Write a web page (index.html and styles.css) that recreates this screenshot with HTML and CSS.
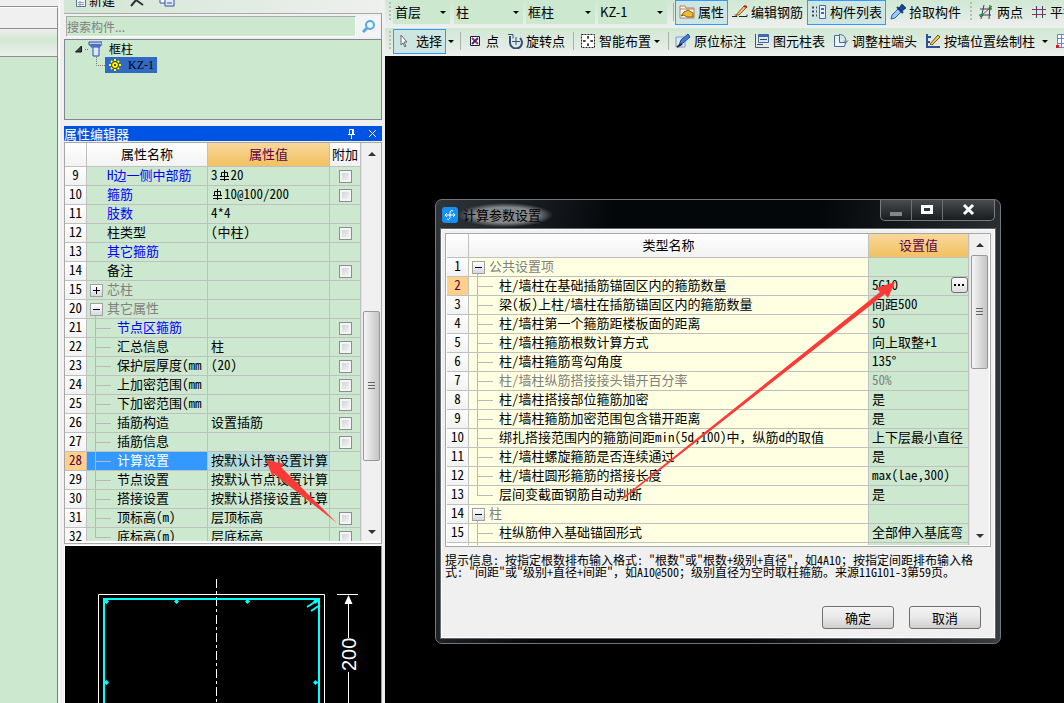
FILE: index.html
```html
<!DOCTYPE html>
<html lang="zh-CN">
<head>
<meta charset="utf-8">
<title>计算参数设置</title>
<link rel="stylesheet" href="styles.css">
</head>
<body>
<div class="app">
  <aside class="strip">
    <div class="strip-row first"></div>
    <div class="strip-row second"></div>
    <div class="strip-row bar"></div>
    <div class="strip-body"></div>
  </aside>

  <aside class="panel">
    <div class="mini-bar">
      <button class="mini"><svg width="10" height="14" viewBox="0 0 10 14"><path d="M.5 .5h9v13h-9z" fill="#f4f8ff" stroke="#5a7396"/><path d="M2 9.500h6M2 11.500h6M4 8v5" stroke="#8aa0c0"/></svg>新建</button>
      <button class="mini" aria-label="删除"><svg width="14" height="14" viewBox="0 0 14 14"><path d="M1 13 6 7 13 12M6 7 11 1" fill="none" stroke="#333" stroke-width="2"/></svg></button>
      <button class="mini" aria-label="复制"><svg width="16" height="14" viewBox="0 0 16 14"><path d="M1 2h8v8H1z" fill="#fff" stroke="#3050a0"/><path d="M6 5h9v8H6z" fill="#dfe9ff" stroke="#3050a0"/><path d="M8 10h5" stroke="#3050a0"/></svg></button>
    </div>
    <div class="search">
      <input type="text" placeholder="搜索构件..." aria-label="搜索构件">
      <button aria-label="搜索"><svg width="15" height="15" viewBox="0 0 15 15"><circle cx="9" cy="6" r="4" fill="#e8f6ff" stroke="#58a8e4" stroke-width="2"/><path d="M6 9 2 13" stroke="#58a8e4" stroke-width="3"/></svg></button>
    </div>
    <div class="tree">
      <div class="node">
        <svg width="28" height="16" viewBox="0 0 28 16"><path d="M7.500 5v6h-6z" fill="#444" stroke="#111"/><path d="M11 8.500h3" stroke="#777" stroke-dasharray="1 1"/><path d="M15 1h13v3H15zM17 4h9v2h-9z" fill="#bcd0ff" stroke="#2c4cae"/><path d="M19 6h6v9h-6z" fill="#dce8ff" stroke="#2c4cae"/></svg>
        <span>框柱</span>
      </div>
      <div class="node child">
        <svg width="9" height="16" viewBox="0 0 9 16"><path d="M.5 0v8.500H9" fill="none" stroke="#777" stroke-dasharray="1 1"/></svg>
        <span class="selected"><svg width="12" height="12" viewBox="0 0 12 12"><path d="M6 0v12M0 6h12M2 2l8 8M10 2l-8 8" stroke="#ff0" stroke-width="2"/><circle cx="6" cy="6" r="3.500" fill="#ff0" stroke="#332e00"/><circle cx="6" cy="6" r="1" fill="#222"/></svg>KZ-1</span>
      </div>
    </div>
    <div class="panel-title">
      <span>属性编辑器</span>
      <button aria-label="固定"><svg width="9" height="11" viewBox="0 0 9 11"><path d="M2.500 6V1.500h4V6M5.500 1v5M1 6.500h7M4.500 7v4" fill="none" stroke="#fff"/></svg></button>
      <button aria-label="关闭"><svg width="9" height="9" viewBox="0 0 9 9"><path d="M1 1l7 7M8 1 1 8" stroke="#fff"/></svg></button>
    </div>
    <div class="grid-box props">
      <div class="grid-view">
        <table class="grid">
          <colgroup><col class="c-num"><col class="c-name"><col><col class="c-add"></colgroup>
          <thead><tr><th></th><th>属性名称</th><th class="hot">属性值</th><th>附加</th></tr></thead>
          <tbody>
            <tr><th>9</th><td class="top blue">H边一侧中部筋</td><td>3<svg class="bar-mark" viewBox="0 0 13 13"><use href="#rebar"/></svg>20</td><td><input type="checkbox" aria-label="附加 9"></td></tr>
            <tr><th>10</th><td class="top blue">箍筋</td><td><svg class="bar-mark" viewBox="0 0 13 13"><use href="#rebar"/></svg>10@100/200</td><td><input type="checkbox" aria-label="附加 10"></td></tr>
            <tr><th>11</th><td class="top blue">肢数</td><td>4*4</td><td></td></tr>
            <tr><th>12</th><td class="top">柱类型</td><td>(中柱)</td><td><input type="checkbox" aria-label="附加 12"></td></tr>
            <tr><th>13</th><td class="top blue">其它箍筋</td><td></td><td></td></tr>
            <tr><th>14</th><td class="top">备注</td><td></td><td><input type="checkbox" aria-label="附加 14"></td></tr>
            <tr><th>15</th><td class="group closed"><button class="toggle plus" aria-label="展开"></button>芯柱</td><td></td><td></td></tr>
            <tr><th>20</th><td class="group"><button class="toggle" aria-label="折叠"></button>其它属性</td><td></td><td></td></tr>
            <tr><th>21</th><td class="leaf blue">节点区箍筋</td><td></td><td><input type="checkbox" aria-label="附加 21"></td></tr>
            <tr><th>22</th><td class="leaf">汇总信息</td><td>柱</td><td><input type="checkbox" aria-label="附加 22"></td></tr>
            <tr><th>23</th><td class="leaf">保护层厚度(mm</td><td>(20)</td><td><input type="checkbox" aria-label="附加 23"></td></tr>
            <tr><th>24</th><td class="leaf">上加密范围(mm</td><td></td><td><input type="checkbox" aria-label="附加 24"></td></tr>
            <tr><th>25</th><td class="leaf">下加密范围(mm</td><td></td><td><input type="checkbox" aria-label="附加 25"></td></tr>
            <tr><th>26</th><td class="leaf">插筋构造</td><td>设置插筋</td><td><input type="checkbox" aria-label="附加 26"></td></tr>
            <tr><th>27</th><td class="leaf">插筋信息</td><td></td><td><input type="checkbox" aria-label="附加 27"></td></tr>
            <tr class="current"><th>28</th><td class="leaf">计算设置</td><td>按默认计算设置计算</td><td></td></tr>
            <tr><th>29</th><td class="leaf">节点设置</td><td>按默认节点设置计算</td><td></td></tr>
            <tr><th>30</th><td class="leaf">搭接设置</td><td>按默认搭接设置计算</td><td></td></tr>
            <tr><th>31</th><td class="leaf">顶标高(m)</td><td>层顶标高</td><td><input type="checkbox" aria-label="附加 31"></td></tr>
            <tr><th>32</th><td class="leaf last">底标高(m)</td><td>层底标高</td><td><input type="checkbox" aria-label="附加 32"></td></tr>
          </tbody>
        </table>
      </div>
      <div class="scroll"><i class="up"></i><div class="track"><b class="thumb"></b></div><i class="down"></i></div>
    </div>
    <div class="section-view">
      <svg width="316" height="158" viewBox="0 0 316 158">
        <g fill="none" stroke="#fff">
          <path d="M33.500 158V48.500h226V158"/>
          <path d="M151.500 33v125" stroke-dasharray="9 3 3 3"/>
          <path d="M272 48.500h21M283.500 50v42M283.500 126v32"/>
        </g>
        <path d="M39 158V53h215v105" fill="none" stroke="#0ff" stroke-width="2"/>
        <path d="M242 61l11-7M246 65l9-6" stroke="#0ff" stroke-width="2"/>
        <path d="M283.500 49l4 9h-8z" fill="#fff"/>
        <path d="M41.500 53l2.500 2.500-2.500 2.500-2.500-2.500zM111.500 53l2.500 2.500-2.500 2.500-2.500-2.500zM182.500 53l2.500 2.500-2.500 2.500-2.500-2.500zM250.500 53l2.500 2.500-2.500 2.500-2.500-2.500zM41.500 134l2.500 2.500-2.500 2.500-2.500-2.500zM250.500 134l2.500 2.500-2.500 2.500-2.500-2.500z" fill="#0ff"/>
        <text class="dim" transform="translate(291 125) rotate(-90)">200</text>
      </svg>
    </div>
  </aside>

  <main class="work">
    <div class="toolbar">
      <i class="grip"></i>
      <label class="combo short"><select aria-label="楼层"><option>首层</option></select><i class="caret"></i></label>
      <label class="combo"><select aria-label="构件类别"><option>柱</option></select><i class="caret"></i></label>
      <label class="combo"><select aria-label="构件类型"><option>框柱</option></select><i class="caret"></i></label>
      <label class="combo"><select aria-label="构件"><option>KZ-1</option></select><i class="caret"></i></label>
      <i class="sep"></i>
      <button class="tool on"><svg viewBox="0 0 16 16"><path d="M1 5V2h5l1 2h8v10H1z" fill="#fff" stroke="#b87a58"/><path d="M1 5h14" stroke="#b87a58"/><path d="M5 8l4-2 5 3v4H8l-3-2-3 1z" fill="#f0bc38" stroke="#80601c"/></svg>属性</button>
      <button class="tool"><svg viewBox="0 0 16 16"><path d="M0 12.500h5l-2-2M7 12.500h8l0-2" fill="none" stroke="#222"/><path d="M4 11l8-9 3 1-8 8z" fill="#ecc06c" stroke="#8c5c30"/><path d="M12 2l3 1" stroke="#c02020" stroke-width="2"/></svg>编辑钢筋</button>
      <button class="tool on"><svg viewBox="0 0 16 16"><path d="M1 3.500h2M1 7.500h2M1 11.500h2M5 3.500h1M5 7.500h1M5 11.500h1" stroke="#446" stroke-width="2"/><path d="M8.500 1.500h6v13h-6z" fill="#e8f0ff" stroke="#4668a8"/><path d="M10 4h3v2h-3zM10 8h3v2h-3z" fill="#4668a8"/></svg>构件列表</button>
      <button class="tool"><svg viewBox="0 0 16 16"><path d="M1 15l1-4 6-6 3 3-6 6z" fill="#9cc8ff" stroke="#2c5fae"/><path d="M7 3l6 6" stroke="#183c80" stroke-width="2"/><path d="M9 5l3-4 3 3-4 3z" fill="#2458a4" stroke="#183c80" stroke-width="2"/></svg>拾取构件</button>
      <i class="grip apart"></i>
      <button class="tool"><svg viewBox="0 0 16 16"><path d="M2 5h12M1 11h12M6 1 3 15M12 1 11 15" stroke="#3c3c70"/><path d="M2 13 14 2" stroke="#c02828"/><circle cx="4" cy="11" r="1.500" fill="#159030"/><circle cx="12" cy="4" r="1.500" fill="#159030"/></svg>两点</button>
      <button class="tool"><svg viewBox="0 0 16 16"><path d="M5.500 2v12M11.500 2v12" stroke="#404078"/><path d="M1 5.500h14M1 10.500h14" stroke="#903050"/></svg>平行</button>
    </div>
    <div class="toolbar lower">
      <i class="grip"></i>
      <button class="tool on"><svg viewBox="0 0 16 16"><path d="M4 2v10l2-2 2 4 1-1-2-4h3z" fill="#fff" stroke="#667"/></svg>选择</button>
      <i class="caret"></i>
      <i class="sep"></i>
      <button class="tool"><svg viewBox="0 0 16 16"><path d="M3.500 3.500h9v9h-9z" fill="#fff" stroke="#223"/><path d="M5 5l6 6" stroke="#d02030" stroke-width="2"/><path d="M11 5l-6 6" stroke="#2030a0" stroke-width="2"/></svg>点</button>
      <button class="tool"><svg viewBox="0 0 16 16"><path d="M3 3v6a6 6 0 1 0 10-4" fill="none" stroke="#36507a" stroke-width="2"/><path d="M1 1.500h5v4M9 4v8M5 8.500h8" fill="none" stroke="#36507a"/></svg>旋转点</button>
      <i class="sep"></i>
      <button class="tool"><svg viewBox="0 0 16 16"><path d="M1.500 1.500h13v13h-13z" fill="#fff" stroke="#222" stroke-dasharray="2 1"/><path d="M8 3v3M8 10v3M3 8h3M10 8h3M7 4h2M7 12h2M4 7v2M12 7v2" stroke="#111"/></svg>智能布置<i class="caret"></i></button>
      <i class="sep"></i>
      <button class="tool"><svg viewBox="0 0 16 16"><path d="M1 4h9v10H1z" fill="#dce8ff" stroke="#8298c0"/><path d="M4 12l2-5 7-6 2 3-7 6z" fill="#4380d4" stroke="#174a96"/><path d="M2 14l5-3" stroke="#222" stroke-width="2"/></svg>原位标注</button>
      <button class="tool"><svg viewBox="0 0 16 16"><path d="M1.500 1v13.500H15" fill="none" stroke="#556"/><path d="M4.500 1.500h10v8h-10z" fill="#d8e6ff" stroke="#4668a8"/><path d="M5 3h9" stroke="#4668a8" stroke-width="2"/><path d="M6 6.500h7M3 11.500h6" stroke="#446"/></svg>图元柱表</button>
      <button class="tool"><svg viewBox="0 0 16 16"><path d="M1.500 2.500h5v7h6l-1 4h-10z" fill="#eef4ff" stroke="#4468a0"/><path d="M6 1.500c5 0 7 3 7 8M11 7.500l2 2 2-2" fill="none" stroke="#4468a0"/></svg>调整柱端头</button>
      <button class="tool"><svg viewBox="0 0 16 16"><path d="M2 1v13h13M2 4h4M2 9h3" fill="none" stroke="#314f92" stroke-width="2"/><path d="M5 11l8-9 2 2-8 8z" fill="#efc960" stroke="#705020"/></svg>按墙位置绘制柱<i class="caret wide"></i></button>
      <button class="tool" aria-label="柱位"><svg viewBox="0 0 16 16"><path d="M1.500 1.500h13v13h-13zM5.500 1v14M10.500 1v14M1 5.500h14M1 10.500h14" fill="#fff" stroke="#6688c0"/><path d="M9 4h3v3H9zM0 12h3v3H0zM9 12h3v3H9z" fill="#e01818"/></svg></button>
    </div>
    <div class="canvas"></div>
  </main>
</div>

<section class="dialog" role="dialog" aria-label="计算参数设置">
  <header>
    <svg width="16" height="16" viewBox="0 0 16 16"><rect width="16" height="16" rx="3" fill="#1690f4"/><path d="M11 4a2 2 0 0 0-3 1v6a2 2 0 0 1-3 1M3 8h10M5 6 3 8l2 2M11 6l2 2-2 2" fill="none" stroke="#fff"/></svg>
    <h1>计算参数设置</h1>
    <div class="win">
      <button aria-label="最小化"><svg width="14" height="14" viewBox="0 0 14 14"><path d="M1 9h12v4H1z" fill="#858585"/></svg></button>
      <button aria-label="最大化"><svg width="14" height="14" viewBox="0 0 14 14"><path d="M2.500 3.500h9v6h-9z" fill="none" stroke="#fff" stroke-width="3"/></svg></button>
      <button class="close" aria-label="关闭"><svg width="14" height="14" viewBox="0 0 14 14"><path d="M2 2l9 9M11 2l-9 9" stroke="#fff" stroke-width="3"/></svg></button>
    </div>
  </header>
  <div class="client">
    <div class="grid-box calc">
      <div class="grid-view">
        <table class="grid">
          <colgroup><col class="c-num"><col><col class="c-val"></colgroup>
          <thead><tr><th></th><th>类型名称</th><th class="hot">设置值</th></tr></thead>
          <tbody>
            <tr><th>1</th><td class="group"><button class="toggle" aria-label="折叠"></button>公共设置项</td><td></td></tr>
            <tr class="mark"><th>2</th><td class="leaf">柱/墙柱在基础插筋锚固区内的箍筋数量</td><td><div class="edit">5G10<button class="more" aria-label="更多"><svg width="11" height="2" viewBox="0 0 11 2"><path d="M0 0h2v2H0zM4 0h2v2H4zM8 0h2v2H8z"/></svg></button></div></td></tr>
            <tr><th>3</th><td class="leaf">梁(板)上柱/墙柱在插筋锚固区内的箍筋数量</td><td>间距500</td></tr>
            <tr><th>4</th><td class="leaf">柱/墙柱第一个箍筋距楼板面的距离</td><td>50</td></tr>
            <tr><th>5</th><td class="leaf">柱/墙柱箍筋根数计算方式</td><td>向上取整+1</td></tr>
            <tr><th>6</th><td class="leaf">柱/墙柱箍筋弯勾角度</td><td>135°</td></tr>
            <tr class="off"><th>7</th><td class="leaf">柱/墙柱纵筋搭接接头错开百分率</td><td>50%</td></tr>
            <tr><th>8</th><td class="leaf">柱/墙柱搭接部位箍筋加密</td><td>是</td></tr>
            <tr><th>9</th><td class="leaf">柱/墙柱箍筋加密范围包含错开距离</td><td>是</td></tr>
            <tr><th>10</th><td class="leaf">绑扎搭接范围内的箍筋间距min(5d,100)<span class="full">中，纵</span>筋d的取值</td><td>上下层最小直径</td></tr>
            <tr><th>11</th><td class="leaf">柱/墙柱螺旋箍筋是否连续通过</td><td>是</td></tr>
            <tr><th>12</th><td class="leaf">柱/墙柱圆形箍筋的搭接长度</td><td>max(lae,300)</td></tr>
            <tr><th>13</th><td class="leaf last">层间变截面钢筋自动判断</td><td>是</td></tr>
            <tr><th>14</th><td class="group"><button class="toggle" aria-label="折叠"></button>柱</td><td></td></tr>
            <tr><th>15</th><td class="leaf">柱纵筋伸入基础锚固形式</td><td>全部伸入基底弯</td></tr>
            <tr><th></th><td class="leaf"></td><td></td></tr>
          </tbody>
        </table>
      </div>
      <div class="scroll"><i class="up"></i><div class="track"><b class="thumb"></b></div><i class="down"></i></div>
    </div>
    <p class="hint">提示信息: 按指定根数排布输入格式: "根数"或"根数+级别+直径"<span class="full">，如</span>4A10；按指定间距排布输入格式: "间距"或"级别+直径+间距"<span class="full">，如</span>A10@500；级别直径为空时取柱箍筋。来源11G101-3第59页。</p>
    <footer><button>确定</button><button>取消</button></footer>
  </div>
</section>

<svg class="arrows" width="1064" height="703" viewBox="0 0 1064 703">
  <path d="M266 460l18 4-3 3 56 56-63-49-1 4zM895 282l-7 16-3-4L622 500l-1-1 259-207-4-4z" fill="#fb3a38"/>
</svg>

<svg class="defs" width="0" height="0"><symbol id="rebar" viewBox="0 0 13 13"><path d="M6.500 1v11M3.500 3.500h6v4h-6zM2 7.500h9M2 10.500h9" fill="none" stroke="#000"/></symbol></svg>
</body>
</html>
```

FILE: styles.css
```css
* { box-sizing: border-box; }

body {
  margin: 0;
  height: 100vh;
  overflow: hidden;
  background: #000;
  color: #000;
  font: 13px/18px "Noto Sans CJK SC", sans-serif;
}

button, input, select { font: inherit; color: inherit; }
button { padding: 0; border: 0; background: none; }
svg { display: block; flex: none; }

.app { display: flex; height: 100%; background: #f0f0f0; }

/* left strip */
.strip { width: 60px; display: flex; flex-direction: column; border-right: 1px solid #fff; }
.strip-row { border-bottom: 1px solid #909090; margin-right: 1px; }
.first { height: 7px; }
.second { height: 22px; border-top: 1px solid #fff; border-right: 1px solid #909090; }
.bar { height: 28px; border-right: 1px solid #909090; background: linear-gradient(#eee, #d2e8d4 40%, #ecefec); }
.strip-body { flex: 1; margin-right: 1px; border-right: 1px solid #808080; background: #cce8cf; }

/* side panel */
.panel { width: 325px; padding: 0 3px 0 4px; display: flex; flex-direction: column; }
.mini-bar {
  height: 13px;
  padding-left: 12px;
  display: flex;
  align-items: flex-end;
  gap: 15px;
  overflow: hidden;
  background: linear-gradient(90deg, #d2e6d4, #eef0ee);
}
.mini { display: flex; align-items: center; gap: 3px; height: 26px; flex: none; }
.search { display: flex; height: 26px; padding: 2px 1px 2px 2px; border-top: 1px solid #aaa; border-right: 1px solid #999; }
.search input {
  flex: 1;
  min-width: 0;
  padding: 0;
  border: 1px solid #aaa;
  border-right-color: #fff;
  border-bottom-color: #fff;
  background: #cce8cf;
  font-size: 12px;
}
.search input::placeholder { color: #808080; }
.search button { width: 24px; display: grid; place-items: center; background: #f2f4f6; }
.tree { height: 81px; padding: 1px 9px; border: 1px solid #808890; background: #cce8cf; font-size: 12px; line-height: 16px; }
.node { display: flex; align-items: center; gap: 7px; }
.node.child { gap: 0; padding-left: 22px; }
.selected { display: flex; align-items: center; gap: 7px; padding: 0 3px 0 4px; background: #316ac5; font-family: "Liberation Serif", serif; }
.panel-title { display: flex; align-items: center; gap: 12px; height: 15px; margin-top: 6px; padding-right: 5px; background: #0054e3; color: #fff; line-height: 15px; }
.panel-title span { flex: 1; }

/* property grids */
.grid-box { display: flex; border: 1px solid #a8a8a8; background: #fff; }
.grid-view { flex: 1; min-width: 0; overflow: hidden; }
.props { height: 402px; margin-top: 1px; padding-bottom: 2px; }
.calc { height: 314px; padding: 0 1px 1px; }
.grid {
  width: 100%;
  table-layout: fixed;
  border-spacing: 0;
  line-height: 16px;
  font-feature-settings: "hwid";
}
.full { font-feature-settings: normal; }
.c-num { width: 22px; }
.c-name { width: 121px; }
.c-add { width: 31px; }
.c-val { width: 100px; }
.grid th, .grid td {
  height: 19px;
  padding: 0 0 2px;
  border-right: 1px solid #c0c0c0;
  border-bottom: 1px solid #c0c0c0;
  font-weight: 400;
  white-space: nowrap;
}
.grid th { background: linear-gradient(#fff, #f2f2f2); text-align: center; }
.grid thead th { height: 24px; }
.grid thead .hot { background: linear-gradient(#f8d79a, #f2c160); color: #60004c; }
.grid td { padding-left: 3px; background: #cce8cf; }
.grid td.top, .grid td.group { padding-left: 20px; }
.grid td.leaf { padding-left: 30px; }
.calc td:nth-child(2) { background-color: #ffffe1; }
.grid .blue { color: #00f; }
.grid .group, .off td { color: #808080; }
.grid td.leaf, .grid td.group {
  background-image: linear-gradient(#b8b8b8, #b8b8b8), linear-gradient(#b8b8b8, #b8b8b8);
  background-repeat: no-repeat;
  background-size: 1px 100%, 16px 1px;
  background-position: 8px 0, 8px 9px;
}
.grid td.leaf.last { background-size: 1px 10px, 16px 1px; }
.grid td.group { background-size: 1px 5px, 0 0; background-position: 8px 100%, 0 0; }
.grid td.closed { background-image: none; }
.grid .current th, .grid .mark th { background: #ffd08a; color: #60004c; }
.current td.leaf { background-color: #3399ff; color: #fff; }
.current td:nth-child(3) { background: #b5dcdb; }
.bar-mark { display: inline-block; width: 13px; height: 13px; vertical-align: -2px; }

.toggle {
  float: left;
  width: 13px;
  height: 13px;
  margin: 3px 0 0 -17px;
  border: 1px solid #a0a0a0;
  background:
    linear-gradient(#000, #000) center / 7px 1px no-repeat,
    linear-gradient(#fff, #d4dae2);
}
.toggle.plus {
  background:
    linear-gradient(#000, #000) center / 7px 1px no-repeat,
    linear-gradient(#000, #000) center / 1px 7px no-repeat,
    linear-gradient(#fff, #d4dae2);
}
.grid input {
  appearance: none;
  display: block;
  width: 13px;
  height: 13px;
  margin: 2px 0 0 6px;
  border: 1px solid #8c8f90;
  background: linear-gradient(135deg, #c8ccd2, #fafafa);
  box-shadow: inset 0 0 0 2px #f4f4f4;
}
.edit { display: flex; justify-content: space-between; align-items: center; height: 16px; }
.more {
  display: grid;
  place-items: center;
  width: 17px;
  height: 16px;
  border: 1px solid #707070;
  border-radius: 3px;
  background: linear-gradient(#fff, #ddd);
}

.scroll { width: 20px; display: flex; flex-direction: column; align-items: center; background: #f0f0f0; border-left: 1px solid #e2e2e2; }
.scroll .up, .scroll .down { border: 4px solid transparent; }
.scroll .up { border-top: 0; border-bottom: 4px solid #333; }
.scroll .down { margin: 7px 0; border-bottom: 0; border-top: 4px solid #333; }
.track { flex: 1; align-self: stretch; display: flex; flex-direction: column; }
.thumb {
  margin: 0 1px;
  border: 1px solid #989898;
  border-radius: 2px;
  background:
    repeating-linear-gradient(#666 0 1px, transparent 1px 3px) center / 7px 9px no-repeat,
    linear-gradient(90deg, #f6f6f6, #dcdcdc 50%, #c4c4c8);
}
.props .thumb { margin-top: 150px; height: 150px; }
.props .up { margin: 9px 0 5px; }
.calc .up { margin: 9px 0 8px; }
.calc .thumb { height: 114px; }

.section-view { flex: 1; margin-top: 1px; border-top: 1px solid #fff; border-left: 1px solid #fff; border-right: 1px solid #999; background: #000; overflow: hidden; }
.dim { font: 20px "Liberation Sans", sans-serif; fill: #fff; }

/* toolbars and canvas */
.work { flex: 1; min-width: 0; display: flex; flex-direction: column; }
.toolbar {
  display: flex;
  align-items: center;
  height: 28px;
  padding: 0 0 4px 4px;
  overflow: hidden;
  background: linear-gradient(#d0e8d3, #e0ece2 60%, #f0f0f0);
}
.toolbar.lower { padding-bottom: 2px; }
.canvas { flex: 1; background: #000; }
.grip { width: 2px; height: 20px; margin-right: 2px; flex: none; background: repeating-linear-gradient(#b4c0b6 0 2px, transparent 2px 4px); }
.grip.apart { margin-left: 5px; }
.combo { display: flex; align-items: center; flex: none; width: 69px; height: 24px; margin-right: 3px; padding-right: 2px; background: #cce8cf; }
.combo.short { width: 57px; margin-right: 4px; }
.combo select { appearance: none; flex: 1; min-width: 0; height: 22px; padding: 0 2px; border: 0; background: none; }
.caret { flex: none; border: 3px solid transparent; border-top-color: #000; border-bottom: 0; margin: 0 2px; }
.tool .caret { margin: 0; }
.tool .caret.wide { margin-left: 4px; }
.sep { width: 1px; height: 18px; margin: 0 2px 0 4px; flex: none; background: #a8b0a8; }
.combo + .sep { margin: 0 1px 0 3px; }
.tool { display: flex; align-items: center; gap: 3px; flex: none; height: 25px; padding: 0 3px; border: 1px solid transparent; white-space: nowrap; }
.tool svg { width: 16px; height: 16px; }
.tool.on { border-color: #3399ff; background: #cde6e2; }

/* floating dialog */
.dialog {
  position: absolute;
  left: 435px;
  top: 199px;
  width: 566px;
  padding: 0 5px 5px;
  border: 1px solid #70767a;
  border-radius: 7px;
  background: linear-gradient(100deg, #30363a, #04070a 28%, #04070a 60%, #3a3d40);
}
.dialog header { display: flex; align-items: center; height: 29px; padding-left: 1px; }
.dialog h1 {
  margin: 0;
  padding: 0 12px 0 5px;
  flex: none;
  font-size: 13px;
  font-weight: 400;
  line-height: 24px;
  background: radial-gradient(closest-side, #84888a 65%, transparent);
}
.win { display: flex; align-self: flex-start; margin-left: auto; border: 1px solid #777d80; border-top: 0; border-radius: 0 0 5px 5px; overflow: hidden; background: linear-gradient(#484c4f, #1a1c1e); }
.win button { width: 31px; height: 20px; display: grid; place-items: center; border-right: 1px solid #6c7072; }
.win .close { width: 51px; border: 0; }
.client { padding: 3px 3px 8px; border: 1px solid #fff; outline: 1px solid #60666a; background: #f0f0f0; }
.hint { margin: 7px 10px 0 0; font-size: 12px; line-height: 12px; font-feature-settings: "hwid"; }
.dialog footer { display: flex; justify-content: flex-end; gap: 15px; margin-top: 28px; padding-right: 10px; }
.dialog footer button { width: 72px; height: 23px; border: 1px solid #707070; border-radius: 3px; background: linear-gradient(#f4f4f4, #e8e8e8 50%, #cfcfcf); }

/* callout arrows drawn over the windows */
.arrows { position: absolute; left: 0; top: 0; pointer-events: none; }
.defs { position: absolute; }
```
